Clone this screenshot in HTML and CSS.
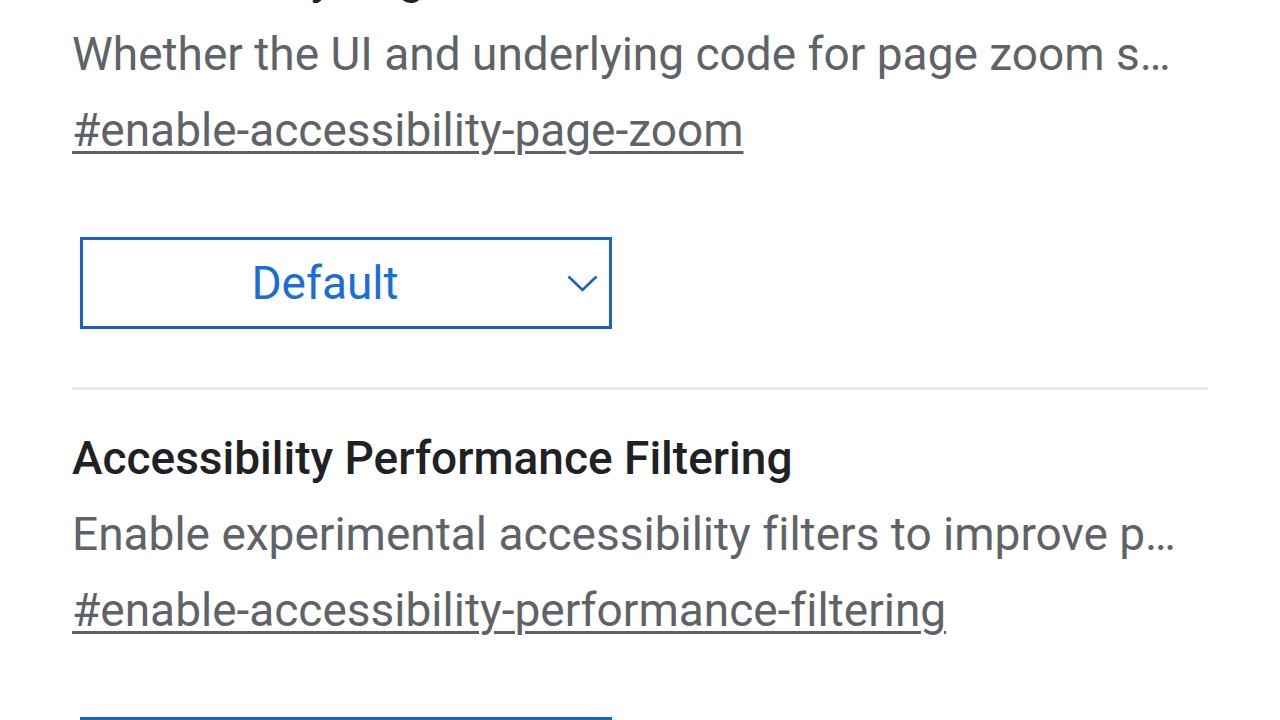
FILE: index.html
```html
<!DOCTYPE html>
<html lang="en">
<head>
<meta charset="utf-8">
<title>Experiments</title>
<link rel="stylesheet" href="styles.css">
</head>
<body>
<main class="experiments">
  <section class="experiment">
    <h2 class="experiment-name">Accessibility Page Zoom</h2>
    <p class="experiment-desc">Whether the UI and underlying code for page zoom should be enabled for Android.</p>
    <a class="permalink" href="#enable-accessibility-page-zoom">#enable-accessibility-page-zoom</a>
    <div class="select">
      <span class="select-label">Default</span>
      <svg class="chevron" width="31" height="17" viewBox="0 0 31 17" aria-hidden="true"><polyline points="1.5,1.5 15.5,15 29.5,1.5" fill="none" stroke="#1a62c9" stroke-width="2.6"/></svg>
    </div>
  </section>
  <section class="experiment">
    <h2 class="experiment-name">Accessibility Performance Filtering</h2>
    <p class="experiment-desc">Enable experimental accessibility filters to improve performance of accessibility services.</p>
    <a class="permalink" href="#enable-accessibility-performance-filtering">#enable-accessibility-performance-filtering</a>
    <div class="select">
      <span class="select-label">Default</span>
      <svg class="chevron" width="31" height="17" viewBox="0 0 31 17" aria-hidden="true"><polyline points="1.5,1.5 15.5,15 29.5,1.5" fill="none" stroke="#1a62c9" stroke-width="2.6"/></svg>
    </div>
  </section>
</main>
</body>
</html>
```
FILE: styles.css
```css
html, body {
  margin: 0;
  padding: 0;
  background: #ffffff;
  overflow: hidden;
}
body {
  font-family: Roboto, "Noto Sans", "Liberation Sans", sans-serif;
  font-size: 46px;
  line-height: 76px;
  color: #5f6368;
  font-variant-ligatures: none;
}
.experiments {
  padding: 0 72px;
  margin-top: -60px;
}
.experiment {
  display: flex;
  flex-direction: column;
  align-items: flex-start;
  padding-bottom: 58px;
}
.experiment + .experiment {
  border-top: 3px solid #ebebeb;
  padding-top: 30px;
}
.experiment-name {
  margin: 0;
  font-size: 46px;
  font-weight: 500;
  line-height: 76px;
  color: #202124;
}
.experiment-desc {
  margin: 0;
  width: 1115px;
  white-space: nowrap;
  overflow: hidden;
  text-overflow: ellipsis;
  color: #5f6368;
}
.permalink {
  color: #5f6368;
  text-decoration: underline;
  text-decoration-thickness: 3px;
  text-underline-offset: 5px;
}
.select {
  margin: 69px 0 0 8px;
  width: 526px;
  height: 86px;
  border: 3px solid #1a62c9;
  display: flex;
  align-items: center;
}
.select-label {
  flex: 1;
  text-align: center;
  color: #1a6ed8;
  font-size: 46px;
}
.chevron {
  margin-right: 11px;
  flex: none;
}
```
